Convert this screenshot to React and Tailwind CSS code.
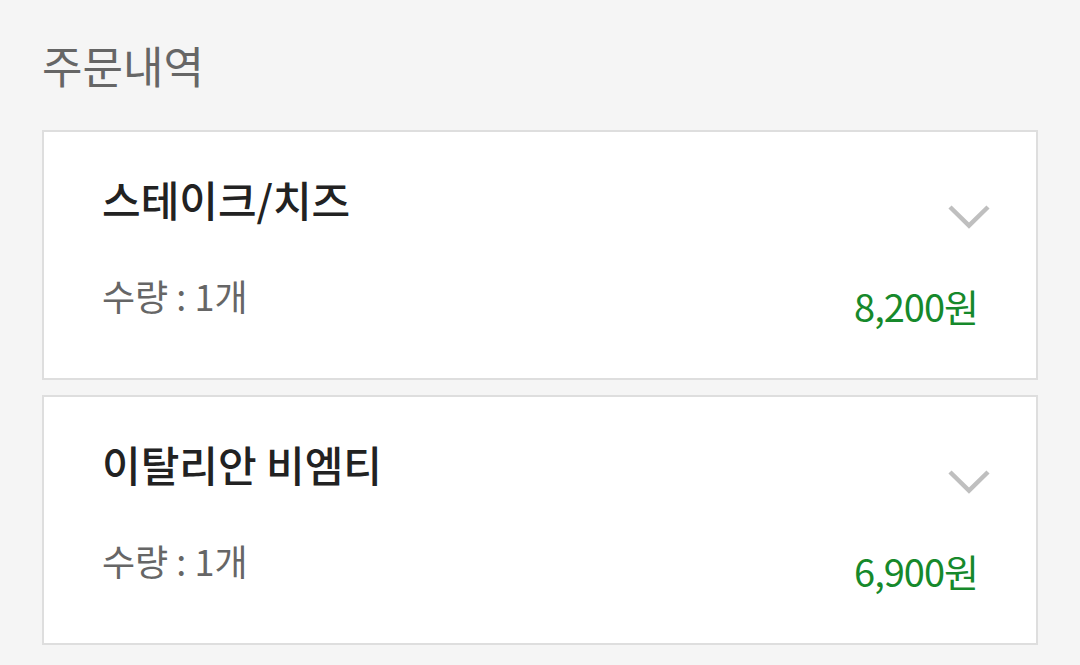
const orders = [
  { name: '스테이크/치즈', qty: 1, price: 8200 },
  { name: '이탈리안 비엠티', qty: 1, price: 6900 },
]

function Chevron() {
  return (
    <svg width="42" height="25" viewBox="0 0 42 25" fill="none">
      <polyline points="2,3 21,21.5 40,3" stroke="#bfbfbf" strokeWidth="4.5" />
    </svg>
  )
}

function OrderCard({ order }) {
  return (
    <div className="flex h-[250px] justify-between border-2 border-[#dedede] bg-white">
      <div className="pl-[58px] pt-[46px]">
        <p className="text-[42px] font-medium leading-none text-[#222]">{order.name}</p>
        <p className="mt-[57px] text-[36px] leading-none text-[#666]">수량 : {order.qty}개</p>
      </div>
      <div className="flex flex-col items-end pr-[46px] pt-[72px]">
        <Chevron />
        <p className="mr-[12px] mt-[58px] text-[38px] leading-none tracking-[-1px] text-[#16892b]">
          {order.price.toLocaleString()}원
        </p>
      </div>
    </div>
  )
}

export default function App() {
  return (
    <div
      className="min-h-screen bg-[#f5f5f5] px-[42px] pt-[43px]"
      style={{ fontFamily: '"Noto Sans CJK KR", "Noto Sans", sans-serif' }}
    >
      <h2 className="text-[44px] leading-none text-[#666]">주문내역</h2>
      <div className="mt-[43px] flex flex-col gap-[15px]">
        {orders.map((order) => (
          <OrderCard key={order.name} order={order} />
        ))}
      </div>
    </div>
  )
}
